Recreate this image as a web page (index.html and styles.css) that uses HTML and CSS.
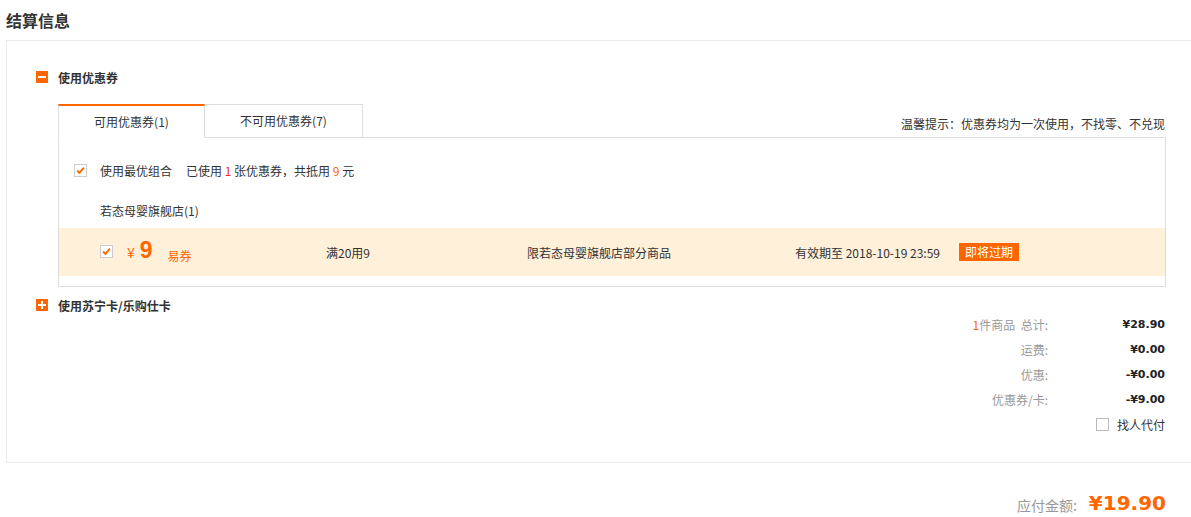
FILE: index.html
```html
<!DOCTYPE html>
<html lang="zh-CN">
<head>
  <meta charset="UTF-8" />
  <title>结算信息</title>
  <link rel="stylesheet" href="styles.css">
</head>
<body>
  <h2 class="page-title">结算信息</h2>

  <div class="panel">
    <div class="sec-head"><span class="toggle minus"></span>使用优惠券</div>

    <div class="coupon-box">
      <div class="tab-bar">
        <div class="tab active">可用优惠券(1)</div>
        <div class="tab">不可用优惠券(7)</div>
        <div class="tip">温馨提示：优惠券均为一次使用，不找零、不兑现</div>
      </div>

      <div class="tab-body">
        <div class="best">
          <span class="chk"><svg viewBox="0 0 13 13"><path d="M2.5 6.5 L5.2 9.2 L10.5 3.2" /></svg></span>
          <span class="best-name">使用最优组合</span>
          <span>已使用 <em class="red">1</em> 张优惠券，共抵用 <em class="orange">9</em> 元</span>
        </div>
        <div class="shop">若态母婴旗舰店(1)</div>
        <div class="coupon-item">
          <div class="cell cell-price">
            <span class="chk"><svg viewBox="0 0 13 13"><path d="M2.5 6.5 L5.2 9.2 L10.5 3.2" /></svg></span>
            <span class="yen">¥</span>
            <span class="amount">9</span>
            <span class="kind">易券</span>
          </div>
          <div class="cell cell-rule">满20用9</div>
          <div class="cell cell-scope">限若态母婴旗舰店部分商品</div>
          <div class="cell cell-date">有效期至 2018-10-19 23:59 <span class="badge">即将过期</span></div>
        </div>
      </div>
    </div>

    <div class="card-row">
      <div class="sec-head"><span class="toggle plus"></span>使用苏宁卡/乐购仕卡</div>
      <div class="summary">
        <div class="sum-row"><span class="sum-label"><em class="orange">1</em>件商品&nbsp; 总计:</span><span class="sum-value">¥28.90</span></div>
        <div class="sum-row"><span class="sum-label">运费:</span><span class="sum-value">¥0.00</span></div>
        <div class="sum-row"><span class="sum-label">优惠:</span><span class="sum-value">-¥0.00</span></div>
        <div class="sum-row"><span class="sum-label">优惠券/卡:</span><span class="sum-value">-¥9.00</span></div>
        <div class="sum-row pay-other"><span class="chk empty"></span>找人代付</div>
      </div>
    </div>
  </div>

  <div class="total">
    <span class="total-label">应付金额:</span>
    <span class="total-value">¥19.90</span>
  </div>
</body>
</html>
```

FILE: styles.css
```css
* {
  margin: 0;
  padding: 0;
  box-sizing: border-box;
}

body {
  font-family: "Noto Sans CJK SC", "Noto Sans", sans-serif;
  font-size: 12px;
  color: #333;
  background: #fff;
  padding: 0 6px;
  overflow: hidden;
}

em {
  font-style: normal;
}

.red {
  color: #f23030;
}

.orange {
  color: #ff6600;
}

.page-title {
  height: 40px;
  line-height: 40px;
  font-size: 16px;
  font-weight: bold;
  color: #333;
}

.panel {
  border: 1px solid #ebebeb;
  border-right: none;
  margin-right: -20px;
  padding: 24px 0 25px 29px;
}

.sec-head {
  display: flex;
  align-items: center;
  height: 24px;
  font-weight: bold;
  color: #333;
}

.toggle {
  width: 12px;
  height: 12px;
  background: #ff6600;
  margin-right: 10px;
  position: relative;
}

.toggle::before,
.toggle.plus::after {
  content: "";
  position: absolute;
  background: #fff;
  left: 2px;
  top: 5px;
  width: 8px;
  height: 2px;
}

.toggle.plus::after {
  left: 5px;
  top: 2px;
  width: 2px;
  height: 8px;
}

.coupon-box {
  margin: 15px 0 0 22px;
  width: 1108px;
}

.tab-bar {
  display: flex;
  align-items: center;
  height: 34px;
}

.tab {
  height: 34px;
  line-height: 32px;
  text-align: center;
  border: 1px solid #ddd;
  border-left: none;
  background: #fff;
  width: 158px;
}

.tab.active {
  width: 147px;
  border-left: 1px solid #ddd;
  border-top: 2px solid #ff6600;
  border-bottom-color: #fff;
  line-height: 31px;
  position: relative;
  z-index: 1;
}

.tip {
  margin-left: auto;
  padding: 4px 1px 0 0;
}

.tab-body {
  margin-top: -1px;
  border: 1px solid #ddd;
  padding: 20px 0 10px;
}

.best {
  display: flex;
  align-items: center;
  height: 24px;
  padding-left: 15px;
}

.chk {
  width: 13px;
  height: 13px;
  border: 1px solid #ccc;
  background: #fff;
  display: inline-block;
  flex-shrink: 0;
}

.chk svg {
  display: block;
  width: 11px;
  height: 11px;
}

.chk path {
  fill: none;
  stroke: #ff6600;
  stroke-width: 2.2;
}

.best .chk {
  margin-right: 13px;
}

.best-name {
  margin-right: 14px;
}

.shop {
  height: 24px;
  line-height: 24px;
  margin-top: 17px;
  padding-left: 41px;
}

.coupon-item {
  margin-top: 5px;
  height: 48px;
  background: #fff0da;
  display: flex;
  align-items: center;
  padding-left: 41px;
}

.cell-price {
  width: 226px;
  display: flex;
  align-items: center;
  color: #ff6600;
}

.cell-price .chk {
  margin-right: 14px;
  margin-top: -2px;
}

.yen {
  font-size: 14px;
  margin-right: 5px;
}

.amount {
  font-family: "Liberation Sans", Arial, sans-serif;
  font-size: 23px;
  font-weight: bold;
  margin-right: 15px;
  margin-top: -3px;
}

.kind {
  margin-top: 6px;
}

.cell-rule {
  width: 201px;
}

.cell-scope {
  width: 268px;
}

.cell-date {
  display: flex;
  align-items: center;
}

.badge {
  background: #ff6600;
  color: #fff;
  height: 18px;
  line-height: 18px;
  padding: 0 6px;
  margin-left: 19px;
  font-size: 12px;
}

.card-row {
  margin-top: 6px;
  width: 1130px;
  display: flex;
  justify-content: space-between;
  align-items: flex-start;
}

.summary {
  padding: 19px 1px 0 0;
}

.sum-row {
  height: 25px;
  display: flex;
  align-items: center;
  justify-content: flex-end;
}

.sum-label {
  color: #999;
  text-align: right;
}

.sum-value {
  width: 117px;
  text-align: right;
  font-family: "DejaVu Sans", Verdana, sans-serif;
  font-size: 11px;
  font-weight: bold;
  color: #222;
}

.pay-other .chk {
  border-color: #bbb;
  margin-right: 8px;
}

.total {
  margin-top: 28px;
  height: 24px;
  display: flex;
  justify-content: flex-end;
  align-items: center;
  padding-right: 19px;
}

.total-label {
  font-size: 14px;
  color: #999;
  margin-right: 12px;
  margin-top: 3px;
}

.total-value {
  font-family: "DejaVu Sans", Verdana, sans-serif;
  font-size: 20px;
  font-weight: bold;
  color: #ff6600;
}
```
